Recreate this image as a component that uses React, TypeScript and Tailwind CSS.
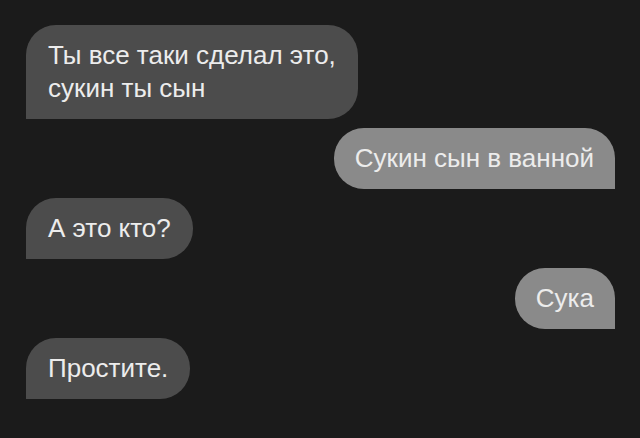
import * as React from "react";

type Msg = { text: React.ReactNode; mine?: boolean };

const messages: Msg[] = [
  { text: <>Ты все таки сделал это,<br />сукин ты сын</> },
  { text: "Сукин сын в ванной", mine: true },
  { text: "А это кто?" },
  { text: "Сука", mine: true },
  { text: "Простите." },
];

function Bubble({ msg }: { msg: Msg }) {
  return (
    <div className={msg.mine ? "flex justify-end" : "flex justify-start"}>
      <div
        className={
          msg.mine
            ? "rounded-[30px] rounded-br-none bg-[#8a8a8a] px-[21px] py-[14px] text-[26px] leading-[33px] text-[#ececec]"
            : "rounded-[30px] rounded-bl-none bg-[#4c4c4c] px-[22px] py-[14px] text-[26px] leading-[33px] text-[#ececec]"
        }
      >
        {msg.text}
      </div>
    </div>
  );
}

export default function App() {
  return (
    <div
      className="flex h-[438px] w-[640px] flex-col gap-[9px] bg-[#1b1b1b] pl-[26px] pr-[25px] pt-[25px]"
      style={{ fontFamily: '"Liberation Sans", Arial, sans-serif' }}
    >
      {messages.map((m, i) => (
        <Bubble key={i} msg={m} />
      ))}
    </div>
  );
}
